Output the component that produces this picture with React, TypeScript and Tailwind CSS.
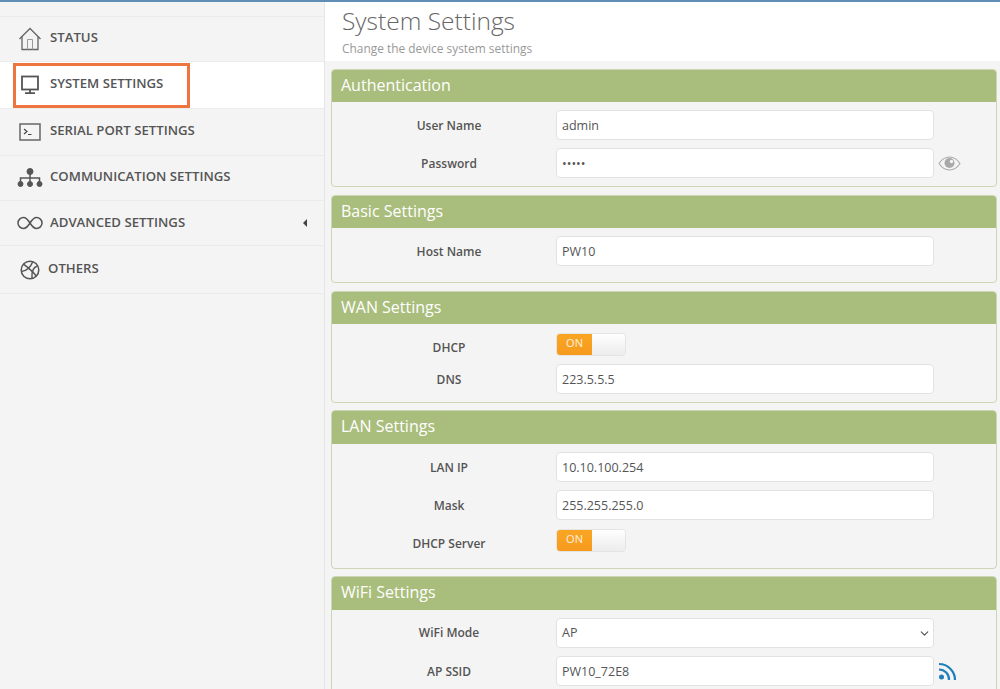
import React from 'react';
import { ChevronDown } from 'lucide-react';

const HomeIcon = () => (
  <svg width="24" height="24" viewBox="0 0 24 24" fill="none" stroke="#666" strokeWidth="1.3">
    <path d="M1.500 12 12 1.500 22.500 12" />
    <path d="M4 9.500V22.500H20V9.500" />
    <path d="M9.500 22.500V12.500H14.500V22.500" strokeWidth="1" stroke="#999" />
  </svg>
);

const MonitorIcon = () => (
  <svg width="20" height="20" viewBox="0 0 20 20" fill="none" stroke="#555">
    <rect x="2" y="1.500" width="16" height="13" strokeWidth="1.800" />
    <path d="M10 15v3M5 18.200h10" strokeWidth="1.800" />
  </svg>
);

const TerminalIcon = () => (
  <svg width="22" height="20" viewBox="0 0 22 20" fill="none" stroke="#666">
    <rect x="1" y="2" width="20" height="16" strokeWidth="1.500" />
    <path d="M5 7l3 2.500L5 12M9 12.500h3.500" strokeWidth="1.200" stroke="#444" />
  </svg>
);

const SitemapIcon = () => (
  <svg width="26" height="20" viewBox="0 0 26 20" fill="#555" stroke="#555">
    <circle cx="13" cy="3.500" r="3" />
    <circle cx="3.500" cy="16" r="2.500" />
    <circle cx="13" cy="16" r="2.500" />
    <circle cx="22.500" cy="16" r="2.500" />
    <path d="M13 6v8M3.500 14v-4h19v4" fill="none" strokeWidth="1.500" />
  </svg>
);

const InfinityIcon = () => (
  <svg width="26" height="14" viewBox="0 0 26 14" fill="none" stroke="#555" strokeWidth="1.500">
    <path d="M13 7C10.500 3 8.500 1.500 6.500 1.500a5.500 5.500 0 0 0 0 11c2 0 4-1.500 6.500-5.500s4.500-5.500 6.500-5.500a5.500 5.500 0 0 1 0 11c-2 0-4-1.500-6.500-5.500Z" />
  </svg>
);

const BallIcon = () => (
  <svg width="20" height="20" viewBox="0 0 20 20" fill="none" stroke="#555" strokeWidth="1.500">
    <circle cx="10" cy="10" r="8.800" />
    <path d="M3.500 4.200c4 3 9 7 12.800 12" />
    <path d="M12.800 1.700C11 6 7 11 1.300 11.500" />
    <path d="M17.500 6c-4 1-6 4.500-5.500 12" />
  </svg>
);

const EyeIcon = () => (
  <svg width="23" height="15" viewBox="0 0 23 15" fill="none">
    <path d="M1 7.500C4 3 7.500 1 11.500 1S19 3 22 7.500C19 12 15.500 14 11.500 14S4 12 1 7.500Z" stroke="#aaa" strokeWidth="1.100" />
    <circle cx="11.500" cy="7" r="5" fill="#a8a8a8" />
    <circle cx="13.500" cy="5.500" r="1.700" fill="#f4f4f4" />
  </svg>
);

const RssIcon = () => (
  <svg width="19" height="19" viewBox="0 0 19 19" fill="none" stroke="#1f7fbd" strokeWidth="2.200">
    <circle cx="3.500" cy="15" r="2.500" fill="#1f7fbd" stroke="none" />
    <path d="M1 7.500a10 10 0 0 1 10 10.500" />
    <path d="M1 2a16 16 0 0 1 16 16" />
  </svg>
);

const items = [
  { label: 'Status', icon: <HomeIcon />, h: 'h-[45px]', text: '-translate-y-[1px]' },
  { label: 'System Settings', icon: <MonitorIcon />, h: 'h-[47px]', text: '-translate-y-[1px]', active: true },
  { label: 'Serial Port Settings', icon: <TerminalIcon />, h: 'h-[47px]', text: '-translate-y-[1px]' },
  { label: 'Communication Settings', icon: <SitemapIcon />, h: 'h-[45px]', text: '-translate-y-[1px]' },
  { label: 'Advanced Settings', icon: <InfinityIcon />, h: 'h-[45px]', text: '', caret: true },
  { label: 'Others', icon: <BallIcon />, h: 'h-[48px]', text: '-translate-y-[1px]', others: true },
];

const Field = ({ label, value, after }: { label: string; value: string; after?: React.ReactNode }) => (
  <div className="flex items-center h-[30px]">
    <label className="w-[214px] text-center text-[12px] font-semibold text-[#555] translate-y-[1px]">{label}</label>
    <input
      readOnly
      value={value}
      className="w-[378px] h-[30px] bg-white border border-[#e2e2e2] rounded-[4px] px-[5px] text-[12.500px] text-[#555] outline-none"
    />
    {after && <span className="ml-[4px] flex">{after}</span>}
  </div>
);

const Toggle = ({ label }: { label: string }) => (
  <div className="flex items-center h-[24px]">
    <label className="w-[214px] text-center text-[12px] font-semibold text-[#555] translate-y-[4px]">{label}</label>
    <div className="flex w-[70px] h-[23px] rounded-[4px] border border-[#e4e4e4] overflow-hidden">
      <div className="w-[35px] bg-gradient-to-b from-[#f9a623] to-[#f79a1d] text-white/85 text-[11px] flex items-center justify-center pb-[2px]">ON</div>
      <div className="flex-1 bg-gradient-to-b from-[#ffffff] to-[#ececec]" />
    </div>
  </div>
);

const Panel = ({ title, body, tall, children }: { title: string; body: string; tall?: boolean; children: React.ReactNode }) => (
  <section className={`border border-[#cdd6b4] rounded-[4px] overflow-hidden shrink-0 ${tall ? '-mt-[1px]' : ''}`}>
    <h2 className={`${tall ? 'h-[33px]' : 'h-[32px]'} bg-[#a9bd7c] text-white text-[16px] leading-[31px] pl-[9px]`}>{title}</h2>
    <div className={`pl-[10px] flex flex-col gap-[8px] ${body}`}>{children}</div>
  </section>
);

export default function App() {
  return (
    <div className="h-screen overflow-hidden flex flex-col bg-[#f4f4f4] font-['Open_Sans',sans-serif] relative">
      <div className="h-[2px] bg-[#5f8db5] shrink-0" />
      <div className="flex flex-1 min-h-0">
        <aside className="w-[325px] shrink-0 border-r border-[#e6e6e6] pt-[14px]">
          <ul className="border-t border-[#ebebeb]">
            {items.map((it) => (
              <li
                key={it.label}
                className={`${it.h} flex items-center border-b border-[#ebebeb] ${it.active ? 'bg-white' : ''}`}
              >
                <span className={`${it.others ? 'w-[48px] pl-[12px]' : 'w-[50px] pl-[10px]'} flex justify-center shrink-0`}>{it.icon}</span>
                <span className={`uppercase text-[13.200px] font-semibold text-[#555] ${it.text}`}>{it.label}</span>
                {it.caret && <span className="ml-auto mr-[17px] w-0 h-0 border-y-[4px] border-y-transparent border-r-[4px] border-r-[#444]" />}
              </li>
            ))}
          </ul>
        </aside>
        <main className="flex-1 min-w-0">
          <header className="h-[59px] bg-white pl-[17px]">
            <h1 className="text-[24.500px] font-light text-[#666] leading-[38px]">System Settings</h1>
            <p className="text-[11.900px] text-[#999] leading-[16px]">Change the device system settings</p>
          </header>
          <div className="pl-[6px] pr-[3px] pt-[8px] flex flex-col gap-[8px]">
            <Panel title="Authentication" body="pt-[8px] pb-[8px]">
              <Field label="User Name" value="admin" />
              <Field label="Password" value="•••••" after={<EyeIcon />} />
            </Panel>
            <Panel title="Basic Settings" body="pt-[8px] pb-[16px]">
              <Field label="Host Name" value="PW10" />
            </Panel>
            <Panel title="WAN Settings" body="pt-[8px] pb-[8px]">
              <Toggle label="DHCP" />
              <Field label="DNS" value="223.5.5.5" />
            </Panel>
            <Panel title="LAN Settings" body="pt-[8px] pb-[16px]" tall>
              <Field label="LAN IP" value="10.10.100.254" />
              <Field label="Mask" value="255.255.255.0" />
              <Toggle label="DHCP Server" />
            </Panel>
            <Panel title="WiFi Settings" body="pt-[8px] pb-[8px]" tall>
              <div className="flex items-center h-[30px]">
                <label className="w-[214px] text-center text-[12px] font-semibold text-[#555]">WiFi Mode</label>
                <div className="w-[378px] h-[30px] bg-white border border-[#e2e2e2] rounded-[4px] pl-[5px] pr-[2px] text-[12.500px] text-[#555] flex items-center justify-between">
                  AP
                  <ChevronDown size={13} strokeWidth={2.2} color="#555" />
                </div>
              </div>
              <Field label="AP SSID" value="PW10_72E8" after={<RssIcon />} />
            </Panel>
          </div>
        </main>
      </div>
      <div className="absolute left-[13px] top-[63px] w-[177px] h-[45px] border-[3px] border-[#ee7440]" />
    </div>
  );
}
